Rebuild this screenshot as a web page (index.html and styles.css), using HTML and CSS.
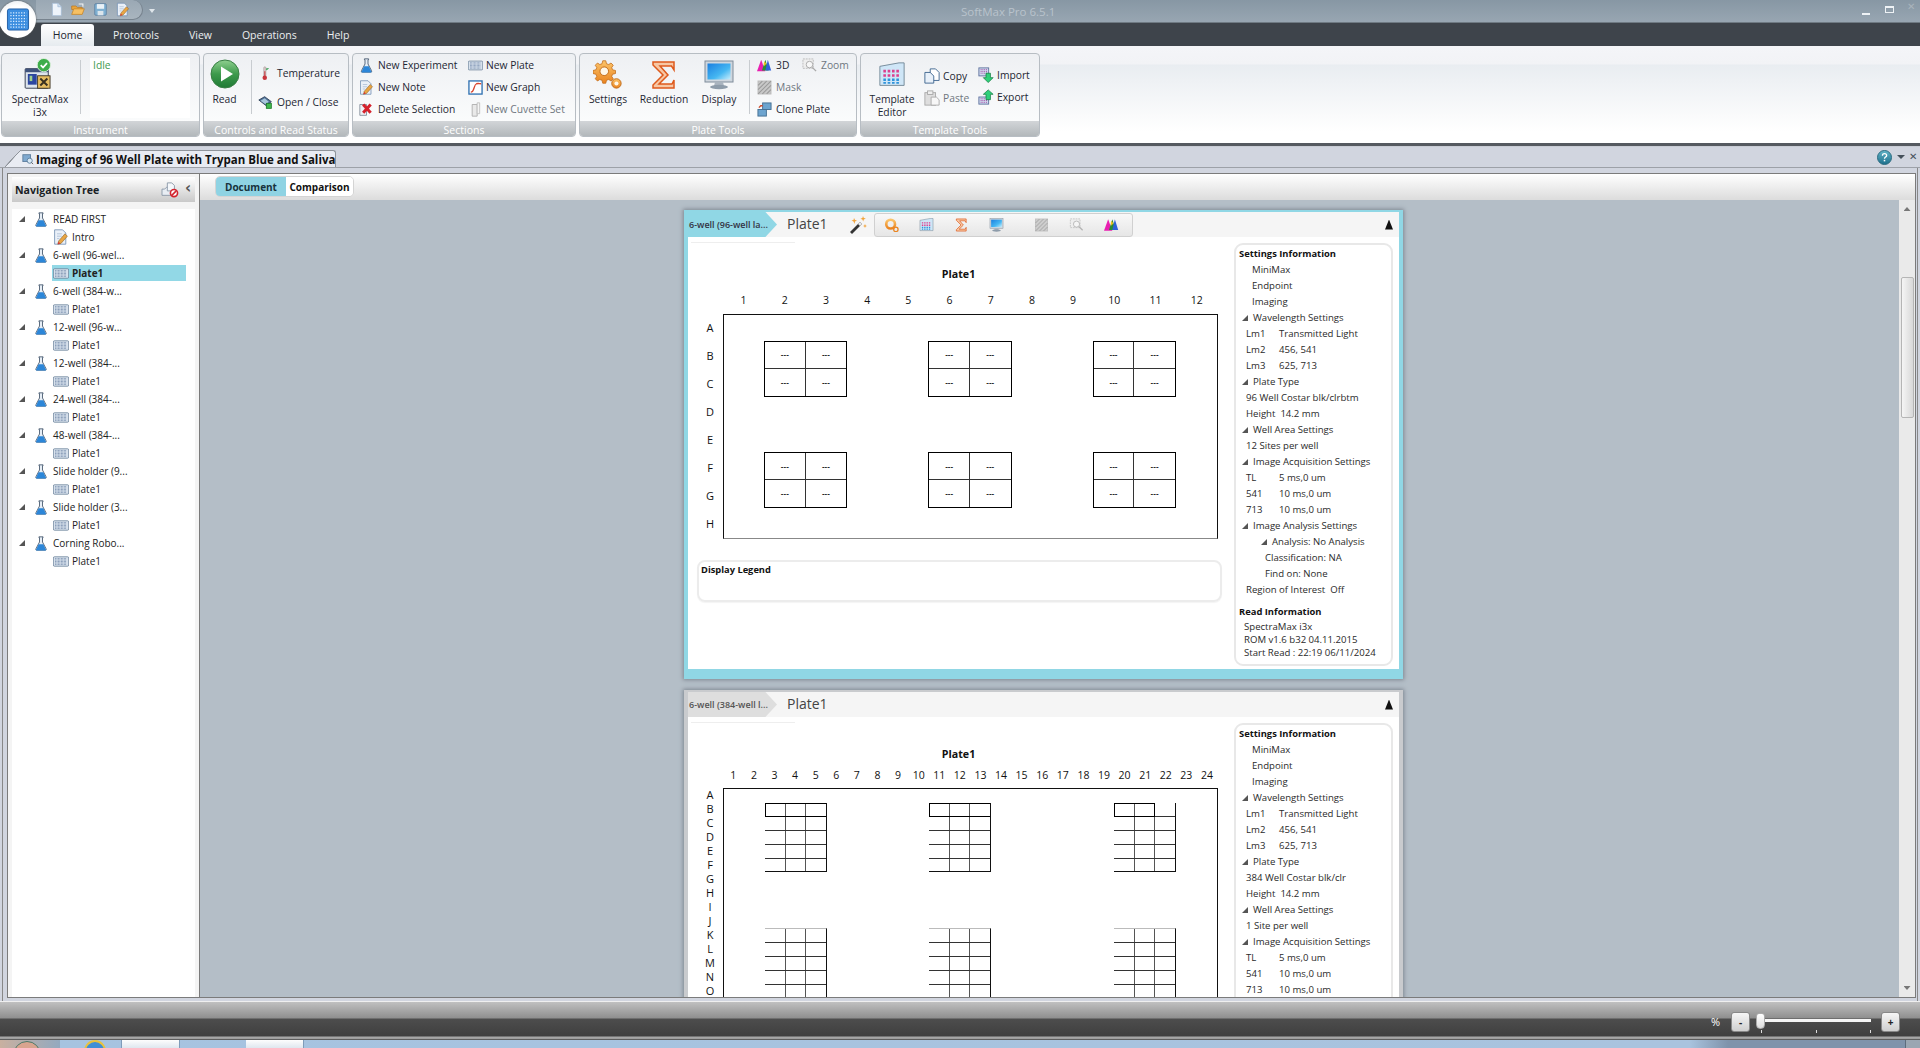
FILE: index.html
```html
<!DOCTYPE html>
<html lang="en">
<head>
<meta charset="utf-8">
<title>SoftMax Pro 6.5.1</title>
<link rel="stylesheet" href="styles.css">
</head>
<body>
<svg class="sprite" xmlns="http://www.w3.org/2000/svg" aria-hidden="true">
<defs>
<linearGradient id="gGreen" x1="0" y1="0" x2="0" y2="1"><stop offset="0" stop-color="#8fd08f"/><stop offset=".5" stop-color="#3d9a4c"/><stop offset="1" stop-color="#1f7a35"/></linearGradient>
<linearGradient id="gScreen" x1="0" y1="0" x2="1" y2="1"><stop offset="0" stop-color="#1b7fe0"/><stop offset=".6" stop-color="#45b7f2"/><stop offset="1" stop-color="#c8eefc"/></linearGradient>
<linearGradient id="gOrange" x1="0" y1="0" x2="0" y2="1"><stop offset="0" stop-color="#fbc46a"/><stop offset="1" stop-color="#ea8420"/></linearGradient>
<linearGradient id="gHelp" x1="0" y1="0" x2="0" y2="1"><stop offset="0" stop-color="#62b4c8"/><stop offset="1" stop-color="#1d6f8c"/></linearGradient>
</defs>
<symbol id="i-doc" viewBox="0 0 16 20"><path d="M2 1h8l5 5v13H2z" fill="#eef4fb" stroke="#9db6d2"/><path d="M10 1v5h5" fill="#cfe0f2" stroke="#9db6d2"/></symbol>
<symbol id="i-folder" viewBox="0 0 20 18"><path d="M1 4h6l2 2h7v3H1z" fill="#e9a53c" stroke="#b9761e"/><path d="M1 16L4 8h15l-3 8z" fill="#f6c063" stroke="#c47f20"/><path d="M11 1h6v4" fill="none" stroke="#f4f4f4" stroke-width="1.5"/></symbol>
<symbol id="i-save" viewBox="0 0 18 18"><rect x="1" y="1" width="16" height="16" rx="1.5" fill="#7fb0d2" stroke="#56799a"/><rect x="4" y="1.5" width="10" height="6.5" fill="#e9f1f7"/><rect x="5" y="11" width="8" height="6" fill="#dbe5ec"/></symbol>
<symbol id="i-note" viewBox="0 0 20 20"><path d="M2 1h10l4 4v14H2z" fill="#eaf0f8" stroke="#6e8cb0"/><path d="M5 6h6M5 9h6M5 12h3" stroke="#a8bcd4"/><path d="M7 15L15 6l3 3-8 9-4 1z" fill="#e8a544" stroke="#8c5e1e" stroke-width=".7"/><path d="M6 19l1-3 2 2z" fill="#d92d3a"/></symbol>
<symbol id="i-flask" viewBox="0 0 14 18"><path d="M4.5 1h5v1h-.7v5.2l4.2 8a1.2 1.2 0 0 1-1 1.8H2a1.2 1.2 0 0 1-1-1.8l4.2-8V2h-.7z" fill="#e6eef6" stroke="#3f5068"/><path d="M4.2 10h5.600l3 6.300a.7.7 0 0 1-.6 1.200H1.800a.7.7 0 0 1-.6-1.200z" fill="#2c86d8"/></symbol>
<symbol id="i-plate" viewBox="0 0 22 14"><rect x=".5" y=".5" width="21" height="13" rx="1.5" fill="#d7e1ec" stroke="#5f7791"/><path d="M3 3H19M3 5H19M3 7H19M3 9H19M3 11H19" stroke="#4a6690" stroke-dasharray="1 1"/></symbol>
<symbol id="i-graph" viewBox="0 0 16 16"><rect x="1" y="1" width="14" height="14" fill="#fff" stroke="#2d6fb0" stroke-width="1.4"/><path d="M3 13c4 0 3-8 6-9 2-.6 3 0 5 0" fill="none" stroke="#d8452e" stroke-width="1.4"/></symbol>
<symbol id="i-delete" viewBox="0 0 18 18"><path d="M1 3h8v13H1z" fill="#eef1f5" stroke="#7c8794"/><path d="M5 3l9 10M14 3L5 13" stroke="#d5222c" stroke-width="3.6"/></symbol>
<symbol id="i-cuvette" viewBox="0 0 12 18"><path d="M2 3h6v14H2z" fill="#e9e9e9" stroke="#a8a8a8"/><path d="M8 1h3v13H8z" fill="#f4f4f4" stroke="#bcbcbc"/></symbol>
<symbol id="i-thermo" viewBox="0 0 12 20"><rect x="3.6" y="1" width="3" height="13" rx="1.5" fill="#d8c8c8" stroke="#9d8a8a" stroke-width=".6"/><rect x="4.4" y="7" width="1.4" height="8" fill="#c7353c"/><circle cx="5" cy="15.5" r="3" fill="#c7353c"/><path d="M7 3h4L7 6z" fill="#2e9a4b"/></symbol>
<symbol id="i-open" viewBox="0 0 18 16"><path d="M1 5l7-4 8 6-6 5z" fill="#4d6f95" stroke="#263a52"/><path d="M3 6l5-3 5 4-4 3z" fill="#a8c6dc"/><rect x="10" y="9" width="6" height="6" fill="#3fb84d" stroke="#1d7a2a"/></symbol>
<symbol id="i-read" viewBox="0 0 30 30"><circle cx="15" cy="15" r="14" fill="url(#gGreen)" stroke="#3a7f45"/><path d="M11 7.5l12 7.5-12 7.5z" fill="#fff"/></symbol>
<symbol id="i-instr" viewBox="0 0 32 36"><rect x="1" y="12" width="26" height="22" rx="1" fill="#dde4ec" stroke="#2a3346"/><rect x="1" y="12" width="26" height="4" fill="#40537c"/><rect x="4" y="18" width="10" height="12" fill="#2c46a0"/><rect x="6" y="20" width="3" height="6" fill="#9ed08d"/><rect x="15" y="20" width="14" height="14" fill="#e6bd62" stroke="#3a3120"/><path d="M18 23l8 8M26 23l-8 8" stroke="#3a3120" stroke-width="2.2"/><circle cx="22" cy="8" r="7.5" fill="#3ead4a" stroke="#dff0df"/><path d="M18.5 8l2.6 2.7 4.5-5" fill="none" stroke="#fff" stroke-width="2"/></symbol>
<symbol id="i-gear" viewBox="0 0 32 32"><path d="M13 1h4l1 4 3 1 3-2 3 3-2 3 1 3 4 1v4l-4 1-1 3 2 3-3 3-3-2-3 1-1 4h-4l-1-4-3-1-3 2-3-3 2-3-1-3-4-1v-4l4-1 1-3-2-3 3-3 3 2 3-1z" transform="scale(.8)" fill="url(#gOrange)" stroke="#c06a16"/><circle cx="12" cy="12" r="4.6" fill="#fff7e8" stroke="#c06a16"/><circle cx="25" cy="25" r="5" fill="url(#gOrange)" stroke="#c06a16"/><circle cx="25" cy="25" r="2.2" fill="#fff7e8"/></symbol>
<symbol id="i-sigma" viewBox="0 0 26 30"><path d="M2 2h21v8l-2.500-4H9l8 9-9 9h13l2-4v8H2v-3l10-10L2 5z" fill="#f7c7a4" stroke="#de5a1c" stroke-width="1.500"/></symbol>
<symbol id="i-display" viewBox="0 0 30 30"><rect x="1" y="1" width="28" height="21" fill="#cfd6de" stroke="#7f8c9a"/><rect x="3.500" y="3.500" width="23" height="16" fill="url(#gScreen)"/><path d="M11 22h8l1 4H10z" fill="#aab4bf"/><ellipse cx="15" cy="27" rx="9" ry="2.200" fill="#8e9caa"/></symbol>
<symbol id="i-3d" viewBox="0 0 18 16"><path d="M5 1l5 14H0z" fill="#e81fb0"/><path d="M10 1l4 13H6z" fill="#2a8c34"/><path d="M13 1l4 13H10z" fill="#2f62d8"/><path d="M9 3l2 3-2 3-1-3z" fill="#f2c21b"/></symbol>
<symbol id="i-zoom" viewBox="0 0 16 16"><rect x="1" y="1" width="11" height="10" fill="#eee" stroke="#bbb" stroke-dasharray="2 1"/><circle cx="8" cy="7" r="3.500" fill="#f7f7f7" stroke="#aaa"/><path d="M11 10l4 4" stroke="#aaa" stroke-width="1.500"/></symbol>
<symbol id="i-mask" viewBox="0 0 14 14"><rect x="1" y="1" width="12" height="12" fill="#c8c8c8" stroke="#bbb"/><path d="M1 5L5 1M1 9L9 1M1 13L13 1M5 13L13 5M9 13l4-4" stroke="#9a9a9a"/></symbol>
<symbol id="i-clone" viewBox="0 0 16 16"><rect x="6" y="1" width="9" height="7" fill="#6da4cf" stroke="#456f92"/><rect x="1" y="8" width="9" height="7" fill="#6da4cf" stroke="#456f92"/><path d="M2 6l2-2h2" fill="none" stroke="#cf4a2a" stroke-width="1.500"/></symbol>
<symbol id="i-template" viewBox="0 0 30 30"><path d="M1 5l22-4h6v26H1z" fill="#cfe6f7" stroke="#6b8190"/><path d="M5 9h3v3H5zM10 9h3v3h-3zM15 9h3v3h-3zM20 9h3v3h-3zM5 14h3v3H5zM10 14h3v3h-3zM15 14h3v3h-3zM20 14h3v3h-3z" fill="#dc3f8e"/><path d="M5 19h3v3H5zM10 19h3v3h-3zM15 19h3v3h-3zM20 19h3v3h-3zM5 23h3v2H5zM10 23h3v2h-3zM15 23h3v2h-3zM20 23h3v2h-3z" fill="#2f93da"/></symbol>
<symbol id="i-copy" viewBox="0 0 18 18"><path d="M7 1h6l4 4v9H7z" fill="#fff" stroke="#38618c"/><path d="M1 5h6l4 4v8H1z" fill="#e8f0f9" stroke="#38618c"/></symbol>
<symbol id="i-paste" viewBox="0 0 18 18"><rect x="1" y="3" width="12" height="14" fill="#dedede" stroke="#a8a8a8"/><rect x="4" y="1" width="6" height="4" fill="#eee" stroke="#a8a8a8"/><path d="M8 8h6l3 3v6H8z" fill="#f7f7f7" stroke="#a8a8a8"/></symbol>
<symbol id="i-import" viewBox="0 0 18 18"><rect x="1" y="1" width="11" height="9" fill="#cfd9ee" stroke="#5b6f9c"/><path d="M3 3h7M3 5h7M3 7h7" stroke="#a0399c" stroke-dasharray="1 1"/><path d="M9 7h5v5h3l-5.500 5.500L6 12h3z" fill="#2fd07a" stroke="#13793f" stroke-width=".8"/></symbol>
<symbol id="i-export" viewBox="0 0 18 18"><rect x="1" y="9" width="11" height="8" fill="#cfd9ee" stroke="#5b6f9c"/><path d="M3 11h7M3 13h7M3 15h7" stroke="#a0399c" stroke-dasharray="1 1"/><path d="M9 12h5V6h3L11.500 1 6 6h3z" fill="#2fd07a" stroke="#13793f" stroke-width=".8"/></symbol>
<symbol id="i-wand" viewBox="0 0 20 20"><path d="M2 17L12 7l2 2L4 19z" fill="#333"/><path d="M10 9l2-2 2 2-2 2z" fill="#e8e8e8"/><path d="M6 3l1 2 2 .5-2 1L6.500 9 5.500 6.500 3.500 5.500l2-.5zM15 1l.8 2 2 .6-2 .8-.6 2-.8-2-2-.7 2-.7zM17 9l.6 1.500 1.400.5-1.400.5-.6 1.500-.6-1.500-1.400-.5 1.400-.5z" fill="#f2a33a"/></symbol>
<symbol id="i-settingsmini" viewBox="0 0 16 16"><circle cx="7" cy="7" r="5" fill="none" stroke="url(#gOrange)" stroke-width="3"/><circle cx="13" cy="13" r="2.500" fill="none" stroke="#ea8420" stroke-width="1.500"/></symbol>
<symbol id="i-nodel" viewBox="0 0 20 18"><path d="M1 8h3l2-2h8v9H1z" fill="#e8edf3" stroke="#8896a6"/><path d="M7 1h5l3 3v6H7z" fill="#f4f7fa" stroke="#8896a6"/><circle cx="14.500" cy="12.500" r="4" fill="#fff" stroke="#d3242e" stroke-width="1.800"/><path d="M12 15l5-5" stroke="#d3242e" stroke-width="1.800"/></symbol>
<symbol id="i-tabdoc" viewBox="0 0 14 14"><rect x="1" y="2" width="9" height="8" fill="#7fa9cf" stroke="#5a7b9a"/><circle cx="9" cy="9" r="3" fill="#d9e9f4" stroke="#5a7b9a"/><path d="M11 11l2 2" stroke="#555"/></symbol>
<symbol id="i-orb" viewBox="0 0 24 24"><rect x="1" y="1" width="22" height="22" rx="2" fill="#3c8ee0" stroke="#225fa6"/><path d="M4 5H21M4 8H21M4 11H21M4 14H21M4 17H21M4 20H21" stroke="#d9ecff" stroke-width="1.300" stroke-dasharray="1.300 1.500"/></symbol>
<symbol id="i-help" viewBox="0 0 16 16"><circle cx="8" cy="8" r="7.500" fill="url(#gHelp)" stroke="#2b6a7e"/><path d="M5.800 6c0-1.500 1-2.200 2.200-2.200s2.300.8 2.300 2c0 1.800-2.300 1.700-2.300 3.500" fill="none" stroke="#fff" stroke-width="1.400"/><rect x="7.200" y="10.500" width="1.600" height="1.600" fill="#fff"/></symbol>
</svg>

<div class="orb"><svg class="orb-ic"><use href="#i-orb"/></svg></div>

<header class="titlebar">
  <div class="qat">
    <svg class="qi q-doc"><use href="#i-doc"/></svg>
    <svg class="qi"><use href="#i-folder"/></svg>
    <svg class="qi q-save"><use href="#i-save"/></svg>
    <svg class="qi"><use href="#i-note"/></svg>
  </div>
  <span class="qat-more"></span>
  <span class="app-title">SoftMax Pro 6.5.1</span>
  <div class="winbtns">
    <span class="w-min"></span>
    <span class="w-max"></span>
    <span class="w-close">✕</span>
  </div>
</header>

<nav class="menubar">
  <span class="menu-tab">Home</span>
  <span class="menu-item">Protocols</span>
  <span class="menu-item">View</span>
  <span class="menu-item">Operations</span>
  <span class="menu-item">Help</span>
</nav>

<section class="ribbon">
  <div class="rgroup g1">
    <div class="rbody">
      <div class="bigbtn b-instr"><svg class="big-instr"><use href="#i-instr"/></svg><span>SpectraMax<br>i3x</span></div>
      <i class="vsep s1"></i>
      <div class="idle">Idle</div>
    </div>
    <div class="rlabel">Instrument</div>
  </div>
  <div class="rgroup g2">
    <div class="rbody">
      <div class="bigbtn b-read"><svg class="big-read"><use href="#i-read"/></svg><span>Read</span></div>
      <i class="vsep s2"></i>
      <div class="scol tr">
        <div class="sbtn"><svg class="si"><use href="#i-thermo"/></svg>Temperature</div>
        <div class="sbtn"><svg class="si"><use href="#i-open"/></svg>Open / Close</div>
      </div>
    </div>
    <div class="rlabel">Controls and Read Status</div>
  </div>
  <div class="rgroup g3">
    <div class="rbody">
      <div class="scol sec1">
        <div class="sbtn"><svg class="si"><use href="#i-flask"/></svg>New Experiment</div>
        <div class="sbtn"><svg class="si"><use href="#i-note"/></svg>New Note</div>
        <div class="sbtn"><svg class="si"><use href="#i-delete"/></svg>Delete Selection</div>
      </div>
      <div class="scol sec2">
        <div class="sbtn"><svg class="si"><use href="#i-plate"/></svg>New Plate</div>
        <div class="sbtn"><svg class="si"><use href="#i-graph"/></svg>New Graph</div>
        <div class="sbtn off"><svg class="si"><use href="#i-cuvette"/></svg>New Cuvette Set</div>
      </div>
    </div>
    <div class="rlabel">Sections</div>
  </div>
  <div class="rgroup g4">
    <div class="rbody">
      <div class="bigbtn b-set"><svg class="big-ic"><use href="#i-gear"/></svg><span>Settings</span></div>
      <div class="bigbtn b-red"><svg class="big-ic"><use href="#i-sigma"/></svg><span>Reduction</span></div>
      <div class="bigbtn b-dis"><svg class="big-ic"><use href="#i-display"/></svg><span>Display</span></div>
      <i class="vsep s4"></i>
      <div class="scol pt1">
        <div class="sbtn"><svg class="si"><use href="#i-3d"/></svg>3D</div>
        <div class="sbtn off"><svg class="si"><use href="#i-mask"/></svg>Mask</div>
        <div class="sbtn"><svg class="si"><use href="#i-clone"/></svg>Clone Plate</div>
      </div>
      <div class="scol pt2">
        <div class="sbtn off"><svg class="si"><use href="#i-zoom"/></svg>Zoom</div>
      </div>
    </div>
    <div class="rlabel">Plate Tools</div>
  </div>
  <div class="rgroup g5">
    <div class="rbody">
      <div class="bigbtn b-tpl"><svg class="big-tpl"><use href="#i-template"/></svg><span>Template<br>Editor</span></div>
      <div class="scol tt1">
        <div class="sbtn"><svg class="si"><use href="#i-copy"/></svg>Copy</div>
        <div class="sbtn off"><svg class="si"><use href="#i-paste"/></svg>Paste</div>
      </div>
      <div class="scol tt2">
        <div class="sbtn"><svg class="si"><use href="#i-import"/></svg>Import</div>
        <div class="sbtn"><svg class="si"><use href="#i-export"/></svg>Export</div>
      </div>
    </div>
    <div class="rlabel">Template Tools</div>
  </div>
</section>

<div class="darkline"></div>

<div class="docstrip">
  <div class="doctab"><svg class="tabic"><use href="#i-tabdoc"/></svg>Imaging of 96 Well Plate with Trypan Blue and Saliva</div>
  <div class="stripctl">
    <svg class="helpic"><use href="#i-help"/></svg>
    <span class="dd"></span>
    <span class="stripx">✕</span>
  </div>
</div>

<main class="workspace">
  <aside class="sidebar">
    <div class="navhead">
      <span class="navtitle">Navigation Tree</span>
      <svg class="navic"><use href="#i-nodel"/></svg>
      <span class="navchev">‹</span>
    </div>
    <div class="tree">
      <div class="t1"><i class="caret"></i><svg class="fl"><use href="#i-flask"/></svg>READ FIRST</div>
      <div class="t2"><svg class="pl nt"><use href="#i-note"/></svg>Intro</div>
      <div class="t1"><i class="caret"></i><svg class="fl"><use href="#i-flask"/></svg>6-well (96-wel...</div>
      <div class="t2 sel"><svg class="pl"><use href="#i-plate"/></svg>Plate1</div>
      <div class="t1"><i class="caret"></i><svg class="fl"><use href="#i-flask"/></svg>6-well (384-w...</div>
      <div class="t2"><svg class="pl"><use href="#i-plate"/></svg>Plate1</div>
      <div class="t1"><i class="caret"></i><svg class="fl"><use href="#i-flask"/></svg>12-well (96-w...</div>
      <div class="t2"><svg class="pl"><use href="#i-plate"/></svg>Plate1</div>
      <div class="t1"><i class="caret"></i><svg class="fl"><use href="#i-flask"/></svg>12-well (384-...</div>
      <div class="t2"><svg class="pl"><use href="#i-plate"/></svg>Plate1</div>
      <div class="t1"><i class="caret"></i><svg class="fl"><use href="#i-flask"/></svg>24-well (384-...</div>
      <div class="t2"><svg class="pl"><use href="#i-plate"/></svg>Plate1</div>
      <div class="t1"><i class="caret"></i><svg class="fl"><use href="#i-flask"/></svg>48-well (384-...</div>
      <div class="t2"><svg class="pl"><use href="#i-plate"/></svg>Plate1</div>
      <div class="t1"><i class="caret"></i><svg class="fl"><use href="#i-flask"/></svg>Slide holder (9...</div>
      <div class="t2"><svg class="pl"><use href="#i-plate"/></svg>Plate1</div>
      <div class="t1"><i class="caret"></i><svg class="fl"><use href="#i-flask"/></svg>Slide holder (3...</div>
      <div class="t2"><svg class="pl"><use href="#i-plate"/></svg>Plate1</div>
      <div class="t1"><i class="caret"></i><svg class="fl"><use href="#i-flask"/></svg>Corning Robo...</div>
      <div class="t2"><svg class="pl"><use href="#i-plate"/></svg>Plate1</div>
    </div>
  </aside>

  <div class="main">
    <div class="viewbar">
      <div class="seg"><span class="seg-on">Document</span><span class="seg-off">Comparison</span></div>
    </div>
    <div class="viewarea">
      <div class="docscroll">

        <article class="card active">
          <div class="cardhead">
            <div class="crumb">6-well (96-well la...</div>
            <div class="cardname">Plate1</div>
            <svg class="wand"><use href="#i-wand"/></svg>
            <div class="minibar">
              <svg class="mi"><use href="#i-settingsmini"/></svg>
              <svg class="mi"><use href="#i-template"/></svg>
              <svg class="mi"><use href="#i-sigma"/></svg>
              <svg class="mi mi-gap"><use href="#i-display"/></svg>
              <svg class="mi off"><use href="#i-mask"/></svg>
              <svg class="mi off"><use href="#i-zoom"/></svg>
              <svg class="mi"><use href="#i-3d"/></svg>
            </div>
            <i class="collapse"></i>
          </div>
          <div class="cardbody">
            <div class="platecol">
              <div class="hairline"></div>
              <div class="platetitle">Plate1</div>
              <div class="cols c12"><span>1</span><span>2</span><span>3</span><span>4</span><span>5</span><span>6</span><span>7</span><span>8</span><span>9</span><span>10</span><span>11</span><span>12</span></div>
              <div class="platerow">
                <div class="rows r8"><span>A</span><span>B</span><span>C</span><span>D</span><span>E</span><span>F</span><span>G</span><span>H</span></div>
                <div class="plate p96">
                  <div class="wg g-a top"><span>---</span><span>---</span><span>---</span><span>---</span></div>
                  <div class="wg g-b top"><span>---</span><span>---</span><span>---</span><span>---</span></div>
                  <div class="wg g-c top"><span>---</span><span>---</span><span>---</span><span>---</span></div>
                  <div class="wg g-a bot"><span>---</span><span>---</span><span>---</span><span>---</span></div>
                  <div class="wg g-b bot"><span>---</span><span>---</span><span>---</span><span>---</span></div>
                  <div class="wg g-c bot"><span>---</span><span>---</span><span>---</span><span>---</span></div>
                </div>
              </div>
              <div class="legend">Display Legend</div>
            </div>
            <div class="info">
              <div class="i-h">Settings Information</div>
              <div class="i-sub">MiniMax</div>
              <div class="i-sub">Endpoint</div>
              <div class="i-sub">Imaging</div>
              <div class="i-sec"><i class="caret"></i>Wavelength Settings</div>
              <div class="i-kv"><span>Lm1</span>Transmitted Light</div>
              <div class="i-kv"><span>Lm2</span>456, 541</div>
              <div class="i-kv"><span>Lm3</span>625, 713</div>
              <div class="i-sec"><i class="caret"></i>Plate Type</div>
              <div class="i-line">96 Well Costar blk/clrbtm</div>
              <div class="i-line">Height&nbsp; 14.2 mm</div>
              <div class="i-sec"><i class="caret"></i>Well Area Settings</div>
              <div class="i-line">12 Sites per well</div>
              <div class="i-sec"><i class="caret"></i>Image Acquisition Settings</div>
              <div class="i-kv"><span>TL</span>5 ms,0 um</div>
              <div class="i-kv"><span>541</span>10 ms,0 um</div>
              <div class="i-kv"><span>713</span>10 ms,0 um</div>
              <div class="i-sec"><i class="caret"></i>Image Analysis Settings</div>
              <div class="i-sec2"><i class="caret"></i>Analysis: No Analysis</div>
              <div class="i-deep">Classification: NA</div>
              <div class="i-deep">Find on: None</div>
              <div class="i-line">Region of Interest&nbsp; Off</div>
              <div class="i-h i-read">Read Information</div>
              <div class="i-tight">SpectraMax i3x</div>
              <div class="i-tight">ROM v1.6 b32 04.11.2015</div>
              <div class="i-tight">Start Read : 22:19 06/11/2024</div>
            </div>
          </div>
        </article>

        <article class="card">
          <div class="cardhead">
            <div class="crumb">6-well (384-well l...</div>
            <div class="cardname">Plate1</div>
            <i class="collapse"></i>
          </div>
          <div class="cardbody">
            <div class="platecol">
              <div class="hairline"></div>
              <div class="platetitle">Plate1</div>
              <div class="cols c24"><span>1</span><span>2</span><span>3</span><span>4</span><span>5</span><span>6</span><span>7</span><span>8</span><span>9</span><span>10</span><span>11</span><span>12</span><span>13</span><span>14</span><span>15</span><span>16</span><span>17</span><span>18</span><span>19</span><span>20</span><span>21</span><span>22</span><span>23</span><span>24</span></div>
              <div class="platerow">
                <div class="rows r16"><span>A</span><span>B</span><span>C</span><span>D</span><span>E</span><span>F</span><span>G</span><span>H</span><span>I</span><span>J</span><span>K</span><span>L</span><span>M</span><span>N</span><span>O</span></div>
                <div class="plate p384">
                  <div class="wh h-a h-top"><i class="firstrow"></i></div>
                  <div class="wh h-b h-top"><i class="firstrow"></i></div>
                  <div class="wh h-c h-top"><i class="firstrow short"></i></div>
                  <div class="wh h-a h-bot"></div>
                  <div class="wh h-b h-bot"></div>
                  <div class="wh h-c h-bot"></div>
                </div>
              </div>
            </div>
            <div class="info">
              <div class="i-h">Settings Information</div>
              <div class="i-sub">MiniMax</div>
              <div class="i-sub">Endpoint</div>
              <div class="i-sub">Imaging</div>
              <div class="i-sec"><i class="caret"></i>Wavelength Settings</div>
              <div class="i-kv"><span>Lm1</span>Transmitted Light</div>
              <div class="i-kv"><span>Lm2</span>456, 541</div>
              <div class="i-kv"><span>Lm3</span>625, 713</div>
              <div class="i-sec"><i class="caret"></i>Plate Type</div>
              <div class="i-line">384 Well Costar blk/clr</div>
              <div class="i-line">Height&nbsp; 14.2 mm</div>
              <div class="i-sec"><i class="caret"></i>Well Area Settings</div>
              <div class="i-line">1 Site per well</div>
              <div class="i-sec"><i class="caret"></i>Image Acquisition Settings</div>
              <div class="i-kv"><span>TL</span>5 ms,0 um</div>
              <div class="i-kv"><span>541</span>10 ms,0 um</div>
              <div class="i-kv"><span>713</span>10 ms,0 um</div>
            </div>
          </div>
        </article>

      </div>
      <div class="vscroll">
        <i class="arr-up"></i>
        <i class="thumb"></i>
        <i class="arr-down"></i>
      </div>
    </div>
  </div>
</main>

<footer class="statusbar">
  <span class="pct">%</span>
  <span class="zbtn">-</span>
  <div class="slider">
    <div class="slider-top"><i class="sthumb"></i><i class="strack"></i></div>
    <div class="sticks"><i></i><i></i><i></i></div>
  </div>
  <span class="zbtn">+</span>
</footer>

<div class="taskbar">
  <i class="tb-start"><b></b></i>
  <i class="tb-ie"></i>
  <i class="tb-btn"></i>
  <i class="tb-btn b2"></i>
  <i class="tb-fill"></i>
  <i class="tb-show"></i>
</div>
</body>
</html>
```

FILE: styles.css
```css
* { box-sizing: border-box; }
html, body { margin: 0; height: 100%; }
body {
  width: 1920px; height: 1048px; overflow: hidden;
  display: flex; flex-direction: column; position: relative;
  font-family: "Open Sans", "Noto Sans", sans-serif; font-size: 10px; color: #1e2733;
  background: #fff;
}
i { display: block; font-style: normal; }
svg { display: block; flex: none; }
.sprite { width: 0; height: 0; overflow: hidden; position: absolute; }

/* orb */
.orb { position: absolute; left: -1px; top: 1px; width: 37px; height: 37px; border-radius: 50%; background: radial-gradient(circle at 50% 60%, #fff 60%, #d8dfe5 100%); display: flex; align-items: center; justify-content: center; z-index: 3; box-shadow: 0 0 2px #555; }
.orb-ic { width: 26px; height: 23px; }

/* title bar */
.titlebar { height: 23px; flex: none; display: flex; align-items: center; background: linear-gradient(#8797a4, #98a6b2); border-bottom: 1px solid #6f7a83; position: relative; padding-left: 36px; }
.qat { width: 107px; height: 20px; margin-top: -3px; display: flex; align-items: center; gap: 9px; padding-left: 15px; background: linear-gradient(#9aa8b4, #a9b5bf); border: 1px solid #77838e; border-left: 0; border-top: 0; border-radius: 0 12px 12px 0; }
.qi { width: 14px; height: 15px; }
.q-doc { width: 11px; }
.q-save { width: 13px; }
.qat-more { width: 0; height: 0; margin: 2px 0 0 6px; border: 3px solid transparent; border-top: 4px solid #dfe6eb; }
.app-title { margin-left: 806px; font-size: 11.5px; color: #b9c3cc; width: 100px; white-space: nowrap; }
.winbtns { margin-left: auto; display: flex; align-items: center; gap: 12px; padding-right: 1px; width: 58px; }
.w-min { width: 8px; height: 2px; margin-top: 6px; background: #eef2f5; }
.w-max { width: 9px; height: 7px; border: 1px solid #eef2f5; border-width: 2px 1px 1px; margin-left: 3px; margin-top: -3px; }
.w-close { color: #aab4bc; font-size: 10px; line-height: 10px; font-family: "DejaVu Sans", sans-serif; margin-left: 1px; margin-top: -8px; }

/* menu */
.menubar { height: 23px; flex: none; display: flex; align-items: flex-end; background: #3e444b; padding-left: 41px; color: #eceef0; font-size: 10.5px; }
.menu-tab { width: 53px; height: 22px; display: flex; align-items: center; justify-content: center; color: #1c2530; background: linear-gradient(#fff, #e6ebef); border-radius: 3px 3px 0 0; margin-right: 19px; }
.menu-item { height: 22px; display: flex; align-items: center; margin-right: 30px; }

/* ribbon */
.ribbon { height: 97px; flex: none; display: flex; padding: 7px 0 6px 1px; gap: 3px; background: linear-gradient(#f4f5f8 0, #f2f3f6 18%, #e9edf1 20%, #fff 88%); font-size: 10.3px; }
.rgroup { display: flex; flex-direction: column; flex: none; border: 1px solid #b7bdc3; border-radius: 4px; overflow: hidden; background: linear-gradient(#eef0f3, #fdfefe); }
.g1 { width: 199px; } .g2 { width: 146px; } .g3 { width: 224px; }
.g4 { width: 278px; } .g5 { width: 180px; }
.rbody { flex: 1; display: flex; min-height: 0; }
.rlabel { height: 15px; flex: none; display: flex; align-items: center; justify-content: center; padding-top: 2px; background: linear-gradient(#d2d5d8, #b3b8bb); color: #fff; font-size: 10.5px; }
.bigbtn { display: flex; flex-direction: column; align-items: center; text-align: center; line-height: 13px; }
.bigbtn span { display: block; }
.b-instr { width: 60px; margin-left: 8px; padding-top: 4px; }
.big-instr { width: 31px; height: 32px; margin-bottom: 3px; margin-left: -3px; }
.vsep { width: 1px; background: #c8ccd0; margin-top: 6px; height: 54px; }
.s1 { margin-left: 10px; } .s2 { margin-left: 11px; } .s4 { margin-left: 6px; }
.idle { width: 100px; height: 60px; margin: 4px 0 0 9px; background: #fff; color: #3f9a4f; padding: 0 3px; line-height: 14px; }
.b-read { width: 31px; margin-left: 5px; padding-top: 5px; }
.big-read { width: 30px; height: 30px; margin-bottom: 4px; }
.tr { margin-left: 6px; padding-top: 8px; gap: 7px; }
.scol { display: flex; flex-direction: column; }
.sbtn { height: 22px; display: flex; align-items: center; white-space: nowrap; gap: 4px; }
.si { width: 15px; height: 15px; }
.off { color: #6f7780; }
.sec1 { width: 109px; margin-left: 6px; }
.sec2 .sbtn { gap: 3px; }
.b-set { width: 50px; margin-left: 3px; padding-top: 6px; }
.b-red { width: 62px; padding-top: 6px; }
.b-dis { width: 48px; padding-top: 6px; }
.big-ic { width: 30px; height: 30px; margin-bottom: 3px; }
.pt1 { margin-left: 7px; width: 45px; }
.b-tpl { width: 50px; margin-left: 6px; padding-top: 8px; }
.big-tpl { width: 28px; height: 26px; margin-bottom: 5px; }
.tt1 { width: 54px; margin-left: 7px; padding-top: 11px; }
.tt2 { padding-top: 10px; }
.tt1 .si, .tt2 .si { width: 16px; height: 16px; }
.tt1 .sbtn, .tt2 .sbtn { gap: 3px; }

.darkline { height: 4px; flex: none; background: linear-gradient(#555a60 0 3px, #c8ccd4 3px); }

/* doc strip */
.docstrip { height: 20px; flex: none; display: flex; align-items: flex-end; background: #d1d5df; padding-left: 20px; }
.doctab { width: 316px; height: 17px; display: flex; align-items: center; gap: 2px; padding-left: 1px; font-weight: 700; font-size: 11.5px; color: #111; background: #e9ecf3; border: 1px solid #8f949b; border-bottom: 0; border-radius: 2px 3px 0 0; white-space: nowrap; position: relative; }
.doctab::before { content: ""; position: absolute; left: -16px; bottom: 0; width: 16px; height: 17px; background: linear-gradient(to top left, #e9ecf3 48%, #8f949b 49%, #8f949b 52%, transparent 53%); }
.tabic { width: 12px; height: 12px; }
.stripctl { margin-left: auto; display: flex; align-items: center; gap: 4px; height: 20px; margin-bottom: 0; padding-right: 1px; }
.helpic { width: 15px; height: 15px; margin-right: 1px; }
.dd { width: 0; height: 0; border: 4px solid transparent; border-top: 4px solid #45505a; margin-top: 4px; }
.stripx { color: #45505a; font: 10px/10px "DejaVu Sans", sans-serif; width: 10px; }

/* workspace */
.workspace { height: 834px; flex: none; display: flex; background: #d1d5df; border-top: 1px solid #9da1a8; padding: 5px 4px 3px 7px; box-shadow: inset 2px 0 0 #d1d5df, inset 3px 0 0 #888, inset -2px 0 0 #d1d5df, inset -3px 0 0 #888; }
.sidebar { width: 193px; flex: none; display: flex; flex-direction: column; background: #f4f4f4; border: 1px solid #7b7b7b; padding: 3px 4px 0; }
.navhead { height: 25px; flex: none; display: flex; align-items: center; padding-left: 3px; background: linear-gradient(#fff, #c9c9c9); }
.navtitle { width: 146px; font-weight: 700; font-size: 10.6px; color: #1a1f26; }
.navic { width: 18px; height: 16px; }
.navchev { margin-left: 6px; font: 700 15px/15px "DejaVu Sans", sans-serif; color: #555; margin-top: -3px; }
.tree { flex: 1; margin-top: 7px; background: #fff; padding-top: 1px; font-size: 10px; color: #222; }
.t1, .t2 { height: 18px; display: flex; align-items: center; white-space: nowrap; }
.t1 { padding-left: 7px; }
.t2 { width: 134px; margin-left: 40px; padding-left: 1px; }
.caret { width: 6px; height: 6px; background: #555; clip-path: polygon(100% 0, 100% 100%, 0 100%); flex: none; }
.fl { width: 12px; height: 15px; margin: 0 6px 0 10px; }
.pl { width: 16px; height: 11px; margin-right: 3px; }
.nt { height: 16px; }
.sel { background: #92d8e6; font-weight: 700; height: 16px; margin-top: 1px; margin-bottom: 1px; }

/* main */
.main { flex: 1; display: flex; flex-direction: column; min-width: 0; border: 1px solid #7b7b7b; border-left: 0; }
.viewbar { height: 26px; flex: none; padding: 2px 0 0 15px; background: linear-gradient(#fff, #dcdcdc); }
.seg { width: 139px; height: 21px; display: flex; border: 1px solid #d4d4d4; border-radius: 5px; overflow: hidden; font-weight: 700; font-size: 10px; }
.seg-on { width: 70px; display: flex; align-items: center; justify-content: center; background: #8fd3e3; color: #17323c; }
.seg-off { flex: 1; display: flex; align-items: center; justify-content: center; background: #fff; color: #111; }
.viewarea { flex: 1; min-height: 0; display: flex; background: #b4bec7; }
.docscroll { flex: 1; min-width: 0; overflow: hidden; padding: 10px 0 0 484px; }

.card { width: 719px; background: #fff; margin-bottom: 11px; border: 4px solid #c9cbce; border-top-width: 2px; border-bottom-width: 10px; box-shadow: 0 0 4px 1px #7e8892; }
.card.active { border-color: #90d7e5; }
.cardhead { height: 25px; display: flex; align-items: center; background: #f5f5f5; }
.crumb { width: 89px; height: 25px; flex: none; display: flex; align-items: center; padding-left: 1px; font-size: 9px; font-weight: 600; color: #555; white-space: nowrap; overflow: hidden; background: #dedede; clip-path: polygon(0 0, 87% 0, 100% 50%, 87% 100%, 0 100%); }
.active .crumb { background: #90d7e5; color: #334; }
.cardname { margin-left: 10px; width: 61px; font-size: 14px; line-height: 18px; padding-bottom: 2px; height: 20px; color: #444; }
.wand { width: 20px; height: 20px; }
.minibar { width: 259px; height: 24px; margin-left: 6px; display: flex; align-items: center; gap: 20px; padding-left: 9px; background: linear-gradient(#f8f8f8, #e6e6e6); border: 1px solid #d0d0d0; border-radius: 3px; }
.mi { width: 15px; height: 14px; }
.mi-gap { margin-right: 10px; }
.mi.off { opacity: .85; }
.collapse { margin-left: auto; margin-right: 6px; width: 8px; height: 10px; background: #111; clip-path: polygon(50% 0, 100% 100%, 0 100%); }
.cardbody { display: flex; min-height: 432px; }
.platecol { width: 546px; padding-left: 9px; flex: none; }
.hairline { width: 104px; height: 1px; margin: 5px 0 0 -6px; background: #eee; }
.platetitle { width: 523px; text-align: center; font-weight: 700; font-size: 10.7px; line-height: 16px; margin-top: 23px; color: #111; }
.cols { display: grid; margin-left: 26px; text-align: center; color: #111; font-size: 10.5px; line-height: 16px; }
.c12 { grid-template-columns: repeat(12, 41.2px); margin-top: 10px; margin-bottom: 6px; }
.c24 { grid-template-columns: repeat(24, 20.6px); margin-top: 5px; margin-bottom: 5px; }
.platerow { display: flex; }
.rows { width: 26px; display: grid; align-content: start; text-align: center; color: #111; font-size: 11px; }
.r8 { grid-template-rows: repeat(8, 28px); line-height: 28px; }
.r16 { grid-template-rows: repeat(15, 14px); line-height: 14px; }
.plate { width: 495px; height: 225px; display: grid; border: 1px solid #111; border-bottom-color: #888; }
.p96 { grid-template-columns: repeat(12, 41.08px); grid-template-rows: repeat(8, 27.9px); }
.p384 { grid-template-columns: repeat(24, 20.54px); grid-template-rows: repeat(16, 13.9px); border-bottom-color: #111; }
.wg { display: grid; grid-template: 1fr 1fr / 1fr 1fr; border: 1px solid #000; margin: -2px 0 2px -1px; }
.wg span { display: flex; align-items: center; justify-content: center; font-family: "Liberation Sans", sans-serif; font-size: 8px; font-weight: 700; color: #111; letter-spacing: 0; font-variant-ligatures: none; border-right: 1px solid #333; border-bottom: 1px solid #333; }
.wg span:nth-child(2n) { border-right: 0; }
.wg span:nth-child(n+3) { border-bottom: 0; }
.g-a { grid-column: 2 / span 2; } .g-b { grid-column: 6 / span 2; } .g-c { grid-column: 10 / span 2; }
.top { grid-row: 2 / span 2; } .bot { grid-row: 6 / span 2; }
.wh { background: repeating-linear-gradient(to bottom, transparent 0 13px, #333 13px 13.9px), repeating-linear-gradient(to right, transparent 0 19.6px, #555 19.6px 20.54px); border-right: 1px solid #111; }
.h-a { grid-column: 3 / span 3; } .h-b { grid-column: 11 / span 3; } .h-c { grid-column: 20 / span 3; }
.h-top { grid-row: 2 / span 5; border-bottom: 1px solid #111; }
.h-bot { grid-row: 11 / span 6; border-top: 1px solid #bbb; }
.firstrow { width: 100%; height: 14px; border: 1px solid #000; border-right: 0; }
.firstrow.short { width: 41px; border-right: 1px solid #000; }
.legend { width: 525px; height: 42px; margin-top: 21px; padding: 1px 2px; border: 2px solid #ececec; border-radius: 8px; font-weight: 700; font-size: 9.3px; color: #111; box-shadow: 0 1px 1px #f4f4f4; }

.info { width: 159px; height: 423px; margin-top: 6px; padding: 1px 0 0 3px; border: 2px solid #e8e8e8; border-radius: 9px; font-size: 9.6px; line-height: 16px; color: #2a2a2a; white-space: nowrap; flex: none; }
.i-h { font-weight: 700; color: #111; font-size: 9.4px; }
.i-sub { padding-left: 13px; }
.i-sec { display: flex; align-items: center; padding-left: 3px; gap: 5px; }
.i-sec2 { display: flex; align-items: center; padding-left: 22px; gap: 5px; }
.i-line { padding-left: 7px; }
.i-kv { display: flex; padding-left: 7px; }
.i-kv span { width: 33px; flex: none; }
.i-deep { padding-left: 26px; }
.i-read { margin-top: 6px; }
.i-tight { line-height: 13.2px; padding-left: 5px; }

.vscroll { width: 16px; flex: none; display: flex; flex-direction: column; align-items: center; background: #eaeaea; padding-top: 7px; }
.arr-up { width: 7px; height: 4px; background: #777; clip-path: polygon(50% 0, 100% 100%, 0 100%); }
.thumb { width: 13px; height: 141px; margin-top: 66px; background: linear-gradient(to right, #f5f5f5, #d8d8d8); border: 1px solid #b5b5b5; border-radius: 2px; }
.arr-down { width: 7px; height: 4px; margin-top: auto; margin-bottom: 7px; background: #777; clip-path: polygon(0 0, 100% 0, 50% 100%); }

/* status */
.statusbar { height: 39px; flex: none; display: flex; align-items: center; justify-content: flex-end; padding-right: 20px; padding-top: 1px; background: linear-gradient(#c0c0c0 0, #8f8f8f 16px, #4d4d4d 17px, #3f3f3f 34px, #aaa 35px, #9a9a9a 37px, #222 38px); border-top: 1px solid #efefef; }
.pct { color: #fff; font-size: 11px; margin-right: 10px; width: 10px; }
.zbtn { width: 19px; height: 20px; display: flex; align-items: center; justify-content: center; background: linear-gradient(#f6f6f6, #cfcfcf); border: 1px solid #888; border-radius: 3px; font-size: 10px; font-weight: 700; color: #222; }
.slider { width: 115px; margin: 0 10px 0 6px; display: flex; flex-direction: column; padding-top: 2px; }
.slider-top { display: flex; align-items: center; height: 17px; }
.sthumb { width: 9px; height: 16px; background: linear-gradient(#fff, #ddd); border: 1px solid #aaa; border-radius: 3px 3px 4px 4px; }
.strack { flex: 1; height: 3px; background: #f5f5f5; }
.sticks { display: flex; justify-content: space-between; padding-left: 5px; height: 3px; margin-top: 1px; }
.sticks i { width: 1px; height: 3px; background: #ddd; }

/* taskbar */
.taskbar { height: 8px; flex: none; display: flex; background: linear-gradient(to right, #a6c3e0 0, #a9c3de 88%, #7f93ab 90%); }
.tb-start { width: 60px; background: linear-gradient(to right, #c9b0a0, #93a9bf); overflow: hidden; padding: 1px 0 0 13px; }
.tb-start b { display: block; width: 28px; height: 28px; border-radius: 50%; background: #d9a48f; border: 1px solid #4b7a6a; }
.tb-ie { width: 62px; border-right: 1px solid #7f9cba; overflow: hidden; }
.tb-ie::before { content: ""; display: block; width: 18px; height: 18px; margin-left: 24px; border: 2px solid #e8c23d; border-radius: 50%; background: #3f8fd6; }
.tb-btn { width: 58px; background: linear-gradient(#fdfdfd, #dfe7ef); border-right: 1px solid #7f9cba; }
.tb-btn.b2 { margin-left: 66px; }
.tb-fill { flex: 1; }
.tb-show { width: 15px; background: #9aa6b2; border-left: 1px solid #5d6c7c; }
```
